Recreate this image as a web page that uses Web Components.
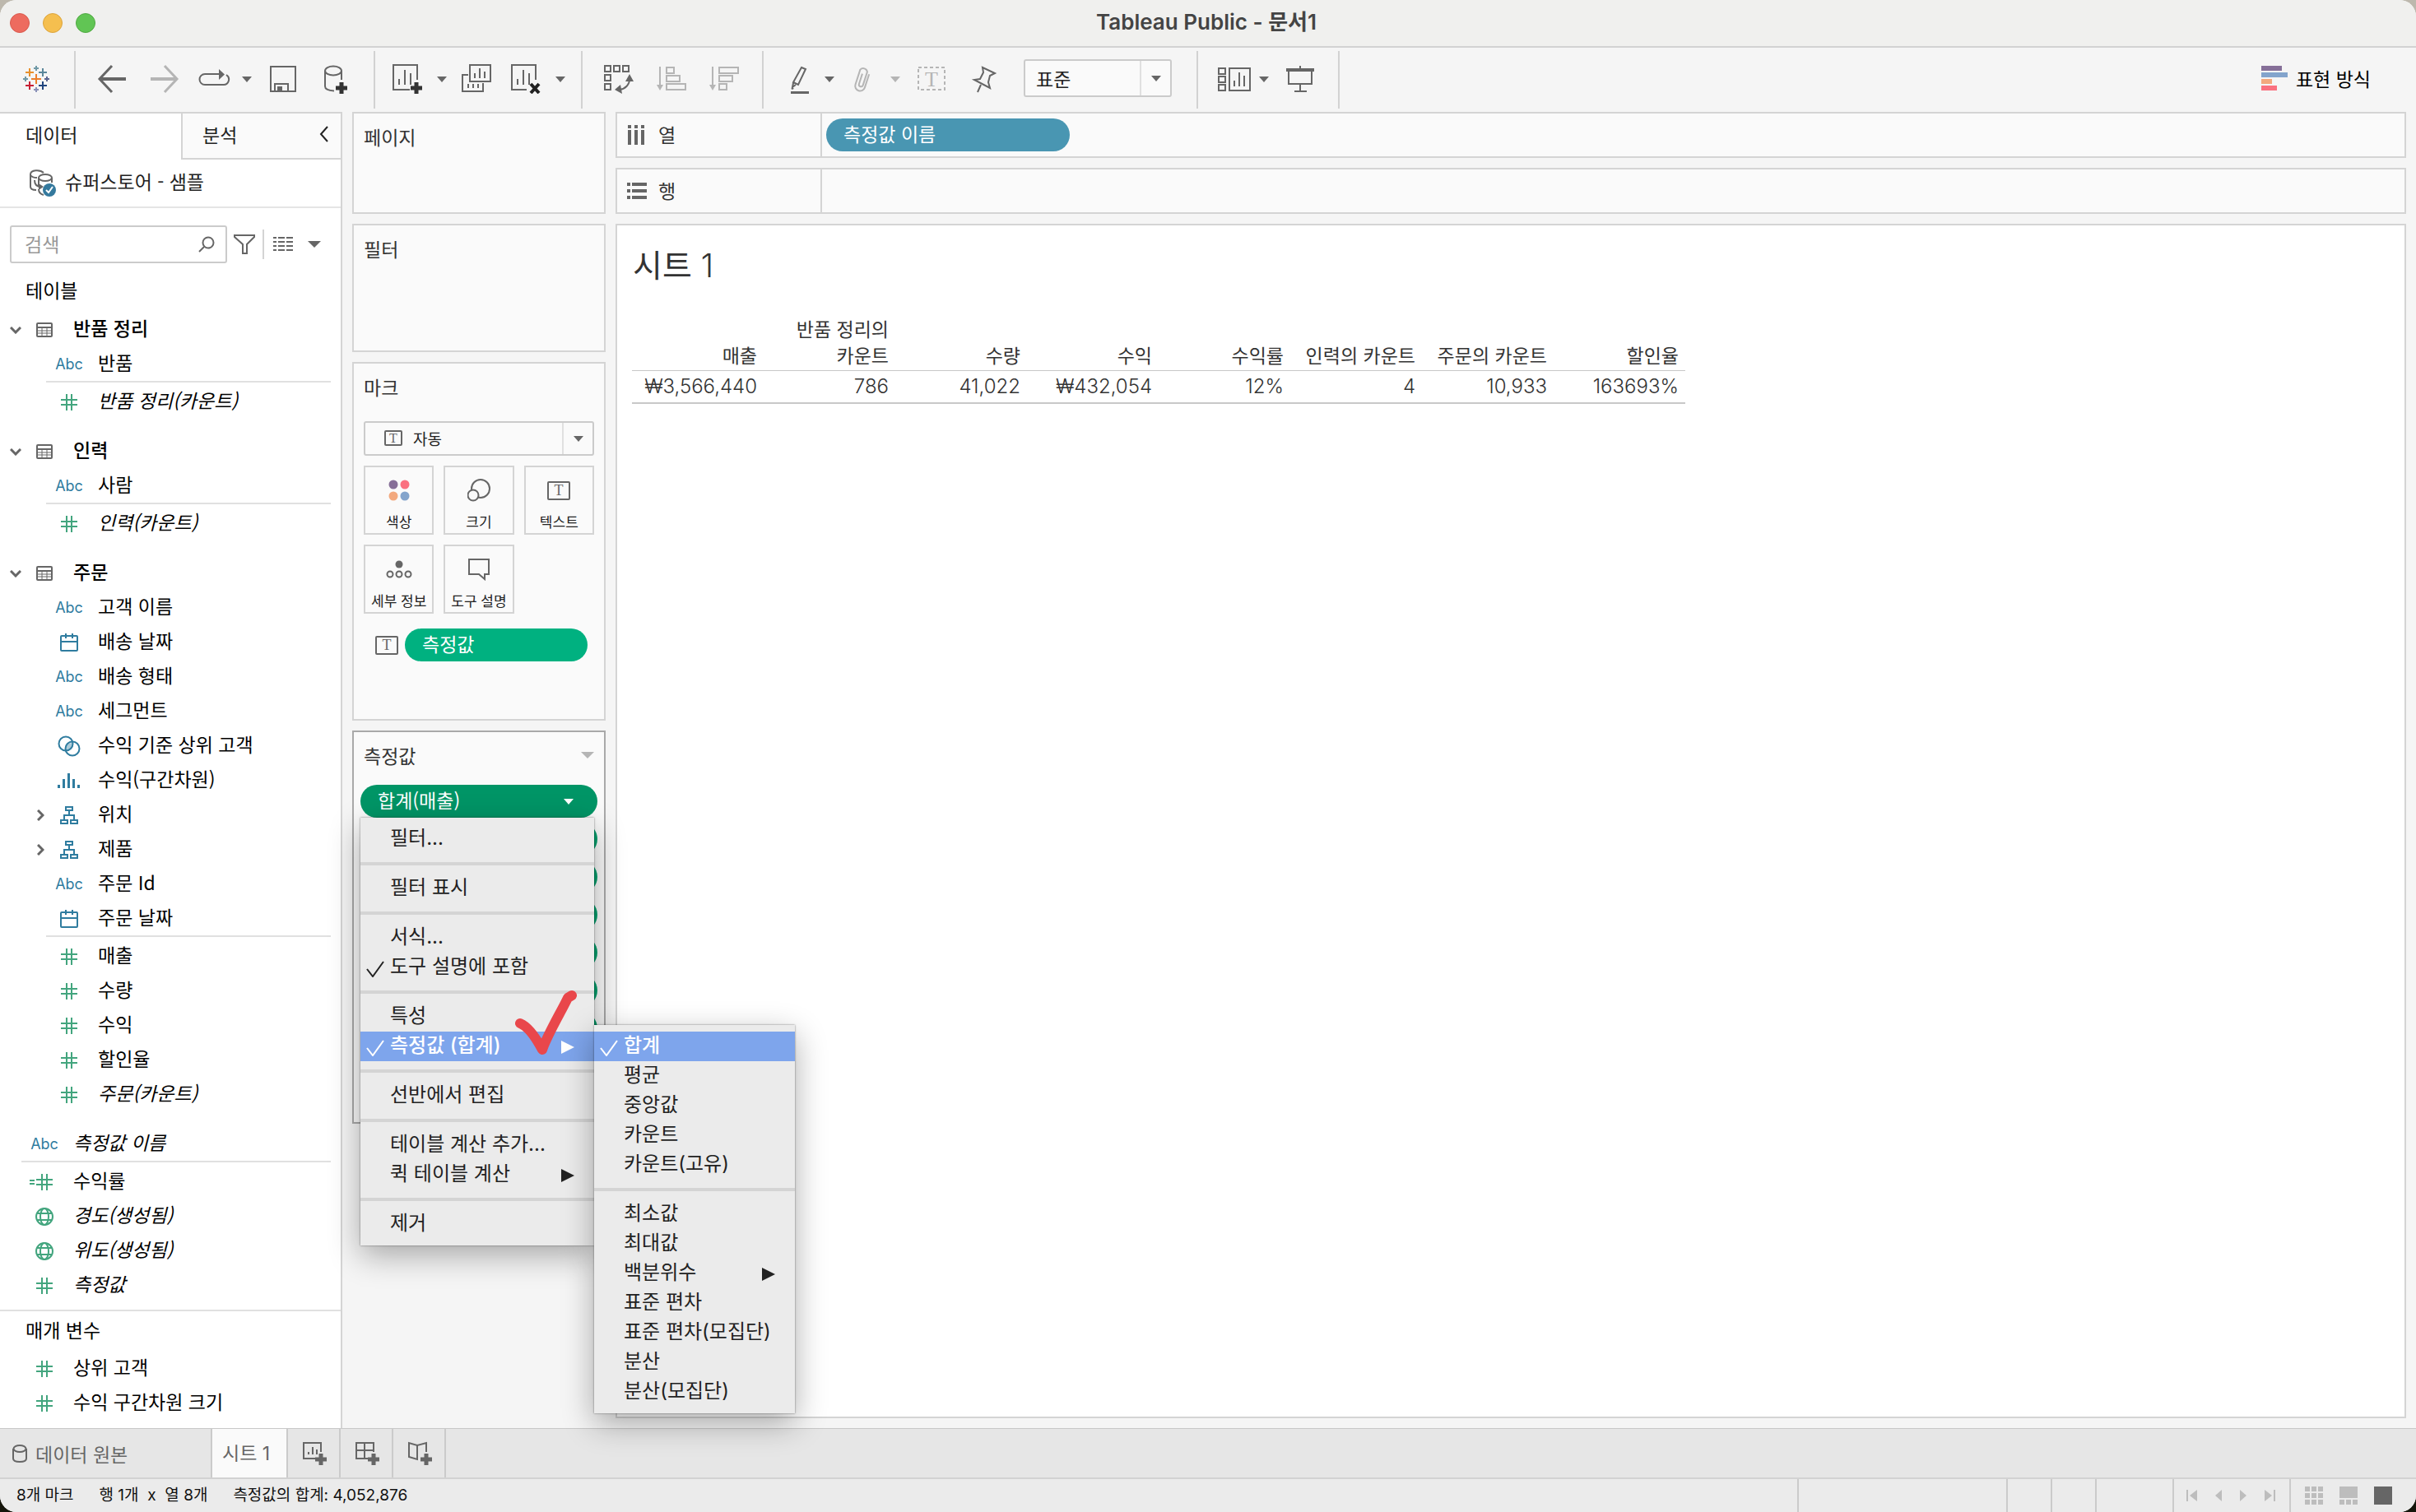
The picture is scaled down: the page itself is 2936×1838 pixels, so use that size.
<!DOCTYPE html>
<html lang="ko">
<head>
<meta charset="utf-8">
<title>Tableau Public - 문서1</title>
<style>
  body {
    margin: 0;
    background: linear-gradient(#bdb8ad 50%, #15160b 50%);
    font-family: "Noto Sans CJK KR", sans-serif;
    font-size: 23px;
    line-height: 32px;
    color: #222;
  }
</style>
</head>
<body>
<wb-window></wb-window>

<script>
// Icons: [width, height, markup]
const plus = (x, y, r, color, w = 2) =>
  `<path stroke="${color}" stroke-width="${w}" d="M${x - r} ${y}h${r * 2}M${x} ${y - r}v${r * 2}"/>`;
const hash = (x) => `<path d="M${x} 7h20M${x} 13h20M${x + 7} 0v20M${x + 13} 0v20"/>`;
const letter = (x, y, size) =>
  `<text x="${x}" y="${y}" font-size="${size}" text-anchor="middle" font-family="Liberation Serif, serif" fill="currentColor" stroke="none">T</text>`;

const icons = {
  logo: [36, 36,
    plus(18, 18, 6, "#eb7f2c") + plus(10, 10, 5, "#e8912d") + plus(26, 10, 5, "#5b879b") +
    plus(10, 26, 5, "#c72035") + plus(26, 26, 5, "#1f447e") + plus(18, 5, 3, "#7099a6") +
    plus(18, 31, 3, "#8a91b8") + plus(5, 18, 3, "#7099a6") + plus(31, 18, 3, "#5b6591")],
  back: [36, 36, '<path stroke-width="4" d="M3 18H35"/><path stroke-width="3" d="M18 2L3 18L18 34"/>'],
  forward: [36, 36, '<path stroke-width="4" d="M1 18H33"/><path stroke-width="3" d="M18 2L33 18L18 34"/>'],
  replay: [40, 36, '<path d="M27 12H9a6.500 6.500 0 0 0 0 13H31a6.500 6.500 0 0 0 4-12"/><path fill="currentColor" stroke="none" d="M26 6L33 12.500L26 19z"/>'],
  save: [36, 36, '<path d="M3 3H33V33H3zM8 33V24H24V33"/><path fill="currentColor" d="M12 32V28H16V32z"/>'],
  dataAdd: [36, 36, '<ellipse cx="15" cy="8" rx="10" ry="5.500"/><path d="M5 8V27C5 30 9 32 16 32.500M25 8V19"/>' + plus(25, 29, 7, "#333", 5)],
  sheetAdd: [36, 36, '<path d="M30 19V1H1V31H21M8 25V18M15 25V7M22 25V11"/>' + plus(29, 29, 7, "#333", 5)],
  sheetClear: [36, 36, '<path d="M30 19V1H1V31H19M8 25V18M15 25V7M22 25V11"/><path stroke="#222" stroke-width="4" d="M24 24L34 35M34 24L24 35"/>'],
  duplicate: [36, 36, '<path d="M10 1H35V21H10zM16 17V11M22 17V5M28 17V9M8 13H1V33H26V23M8 24V29M14 24V29M20 24V29"/>'],
  swap: [36, 36, '<path d="M1 2h7v7h-7zM12 2h7v7h-7zM23 2h7v7h-7zM1 13h7v7h-7zM1 24h7v7h-7z"/><path d="M31 18C31 25 26 30 19 31"/><path fill="currentColor" stroke="none" d="M31 12L36 21H26zM13 31L20 25L22 36z"/>'],
  sortAsc: [36, 36, '<path d="M4 3V28M12 4h9v7h-9zM12 14h16v7H12zM12 24h23v7H12z"/><path fill="currentColor" stroke="none" d="M0 25H8L4 32z"/>'],
  sortDesc: [36, 36, '<path d="M4 3V28M12 4h23v7H12zM12 14h16v7H12zM12 24h9v7h-9z"/><path fill="currentColor" stroke="none" d="M0 25H8L4 32z"/>'],
  highlight: [36, 36, '<path d="M20 4L25 6L16 25L10 22zM10 23L9 28L13 25"/><path stroke="none" fill="currentColor" d="M7 33H29V36H7zM8 27l3 3-3 1z"/>'],
  clip: [36, 36, '<path transform="rotate(18 18 18)" d="M24 10V27a6 6 0 0 1-12 0V8a5 5 0 0 1 9 0V25a2.500 2.500 0 0 1-5 0V12"/>'],
  textDash: [36, 36, '<path stroke-dasharray="4 3" d="M2 4H34V31H2z"/>' + letter(18, 27, 26)],
  pin: [36, 36, '<path d="M16 4L31 11L25 14L23 22L25 29L6 19L13 18L17 10zM14 25L10 34"/>'],
  cards: [40, 36, '<path d="M1 5h8v7H1zM1 15h8v7H1zM1 25h8v7H1zM14 5H39V32H14zM20 27V20M26 27V10M32 27V14"/>'],
  present: [36, 36, '<path d="M4 8H32V24H4zM18 2V6M18 24V33M11 33H26"/><path stroke-width="4" d="M1 7H35"/>'],
  showMe: [32, 30, '<g stroke="none"><path fill="#866f98" d="M0 0h25v6H0z"/><path fill="#83a4cc" d="M0 8h32v6H0z"/><path fill="#f3a97e" d="M0 16h13v6H0z"/><path fill="#fa7180" d="M0 24h19v6H0z"/></g>'],
  caret: [12, 7, '<path fill="currentColor" stroke="none" d="M0 0H12L6 7z"/>'],
  caretWide: [16, 8, '<path fill="currentColor" stroke="none" d="M0 0H16L8 8z"/>'],
  chevLeft: [12, 20, '<path d="M10 1L2 10L10 19"/>'],
  chevDown: [14, 9, '<path stroke-width="3" d="M1 1L7 7L13 1"/>'],
  chevRight: [9, 14, '<path stroke-width="3" d="M1 1L7 7L1 13"/>'],
  source: [34, 34, '<path d="M18 4C14 0 2 0 2 6V21C2 24 5 25 9 25M2 7C4 10 8 10 10 10M7 13C7 19 10 21 15 21"/><ellipse cx="20" cy="10" rx="8" ry="4"/><path d="M12 10V20M28 10V16M12 24C12 28 14 30 18 31"/><path fill="currentColor" stroke="none" d="M12 17l6 4-6 4z"/><circle cx="25" cy="25" r="8" fill="#34799d" stroke="none"/><path stroke="#fff" d="M21 25L24 28L29 21"/>'],
  search: [20, 20, '<circle cx="12" cy="8" r="6.500"/><path d="M7 13L1 19"/>'],
  funnel: [28, 26, '<path d="M2 2H26V4L17 13V24H12V13L2 4z"/>'],
  list: [24, 20, '<path stroke-dasharray="4 2 8 2 8 2" d="M0 2H24M0 7H24M0 12H24M0 17H24"/>'],
  table: [20, 20, '<rect x="1" y="2" width="18" height="16" rx="1"/><path d="M1 7H19"/><path stroke-width="1" d="M1 11H19M1 14H19M7 7V18M13 7V18"/>'],
  hash: [20, 20, hash(0)],
  calc: [40, 20, hash(10) + '<path d="M2 8H8M2 12H8"/>'],
  date: [22, 22, '<rect x="1" y="3" width="20" height="18" rx="1"/><path d="M1 10H21M7 0V6M15 0V6"/>'],
  set: [28, 26, '<path fill="currentColor" fill-opacity=".4" stroke="none" d="M18 9C12 9 9 13 10 18C16 18 19 14 18 9z"/><circle cx="10" cy="10" r="8.500"/><circle cx="18" cy="16" r="8.500"/>'],
  bin: [28, 20, '<g fill="currentColor" stroke="none"><rect y="15" width="3" height="4"/><rect x="6" y="8" width="3" height="11"/><rect x="12" y="1" width="3" height="18"/><rect x="18" y="8" width="3" height="11"/><rect x="24" y="15" width="3" height="4"/></g>'],
  hierarchy: [22, 22, '<path d="M7 1h8v4H7zM1 17h8v4H1zM13 17h8v4h-8zM11 5V11M5 17V11H17V17"/>'],
  globe: [22, 22, '<circle cx="11" cy="11" r="10"/><ellipse cx="11" cy="11" rx="5" ry="10"/><path d="M2 7H20M2 15H20"/>'],
  columns: [24, 24, '<path stroke-width="4" stroke-dasharray="4 2 18" d="M3 0V24M11 0V24M19 0V24"/>'],
  rows: [24, 20, '<path stroke-width="4" stroke-dasharray="4 2 18" d="M0 2H24M0 10H24M0 18H24"/>'],
  textBox: [28, 24, '<rect x="1" y="2" width="26" height="21" rx="1"/>' + letter(14, 18, 18)],
  textSmall: [22, 20, '<rect x="1" y="1" width="20" height="17" rx="1"/>' + letter(11, 15, 16)],
  color: [26, 26, '<g stroke="none"><circle cx="6" cy="6" r="5.500" fill="#866f98"/><circle cx="20" cy="6" r="5.500" fill="#fa7180"/><circle cx="6" cy="20" r="5.500" fill="#f3a97e"/><circle cx="20" cy="20" r="5.500" fill="#83a4cc"/></g>'],
  size: [28, 28, '<circle cx="16" cy="12" r="11"/><circle cx="7" cy="20" r="6.500" fill="#fafafa"/>'],
  detail: [32, 24, '<circle cx="16" cy="6" r="4.500" fill="currentColor" stroke="none"/><circle cx="5" cy="18" r="3.500"/><circle cx="16" cy="18" r="3.500"/><circle cx="27" cy="18" r="3.500"/>'],
  tooltip: [28, 28, '<path d="M2 2H26V20H21V26L14 20H2z"/>'],
  check: [22, 20, '<path d="M1 10L8 19L21 1"/>'],
  arrow: [16, 16, '<path fill="currentColor" stroke="none" d="M0 0L16 8L0 16z"/>'],
  mark: [76, 80, '<path stroke-width="12" stroke-linecap="round" stroke-linejoin="round" d="M6 41C16 45 25 58 33 73C39 55 57 25 64 10L69 7"/>'],
  cylinder: [18, 22, '<ellipse cx="9" cy="5" rx="7.500" ry="4"/><path d="M1 5V17C1 20 5 21 9 21C13 21 17 20 17 17V5"/>'],
  tabSheet: [30, 30, '<path d="M22 13V2H1V21H16M7 16V13M12 16V7M17 16V10"/>' + plus(22, 22, 7, "#666", 5)],
  tabBoard: [30, 30, '<path d="M22 13V2H1V21H16M11 2V21M1 11H22"/>' + plus(22, 22, 7, "#666", 5)],
  tabStory: [30, 30, '<path d="M22 13V2L11 5L1 2V19L11 22V5"/>' + plus(22, 22, 7, "#666", 5)],
  first: [14, 14, '<path d="M1 0V14"/><path fill="currentColor" stroke="none" d="M13 0V14L4 7z"/>'],
  prev: [10, 14, '<path fill="currentColor" stroke="none" d="M9 0V14L1 7z"/>'],
  next: [10, 14, '<path fill="currentColor" stroke="none" d="M1 0V14L9 7z"/>'],
  last: [14, 14, '<path d="M13 0V14"/><path fill="currentColor" stroke="none" d="M1 0V14L10 7z"/>'],
  grid: [22, 22, '<path stroke-width="6" stroke-dasharray="6 2" d="M0 3H22M0 11H22M0 19H22"/>'],
  film: [22, 22, '<path stroke-width="14" d="M0 7H22"/><path stroke-width="6" stroke-dasharray="6 2" d="M0 19H22"/>'],
  full: [22, 22, '<path fill="currentColor" stroke="none" d="M0 0H22V22H0z"/>'],
};

class WbIcon extends HTMLElement {
  static observedAttributes = ["name"];

  constructor() {
    super();
    this.attachShadow({ mode: "open" });
  }

  attributeChangedCallback(attribute, previous, name) {
    const [w, h, body] = icons[name];
    this.shadowRoot.innerHTML = `
      <style>
        :host { display: block; flex: none; }
        svg { display: block; }
      </style>
      <svg width="${w}" height="${h}" viewBox="0 0 ${w} ${h}" fill="none" stroke="currentColor" stroke-width="2" aria-hidden="true">${body}</svg>
    `;
  }
}

customElements.define("wb-icon", WbIcon);

// Registers an element whose shadow root is cloned from one template
const define = (name, html, setup) => {
  const template = document.createElement("template");
  template.innerHTML = html;
  customElements.define(name, class extends HTMLElement {
    constructor() {
      super();
      this.attachShadow({ mode: "open" }).append(document.importNode(template.content, true));
    }
    connectedCallback() {
      if (setup) setup(this, this.shadowRoot);
    }
  });
};

define("wb-titlebar", `
  <style>
    :host {
      display: grid;
      grid-template-columns: 1fr auto 1fr;
      align-items: center;
      height: 56px;
      background: #f0f0ee;
      border-bottom: 2px solid #d2d2d2;
    }
    .lights { display: flex; gap: 16px; padding-left: 12px; }
    button { width: 24px; height: 24px; padding: 0; border: 1px solid #d8594d; border-radius: 50%; background: #ed6b5f; }
    button:nth-child(2) { background: #f5bf4f; border-color: #dba33b; }
    button:nth-child(3) { background: #61c554; border-color: #50a842; }
    h1 { margin: 0; padding: 0 4px 2px 0; font: 600 26px/32px Inter, "Noto Sans CJK KR", sans-serif; color: #444; }
  </style>
  <div class="lights">
    <button aria-label="닫기"></button><button aria-label="최소화"></button><button aria-label="확대"></button>
  </div>
  <h1><slot></slot></h1>
`);

define("wb-tool", `
  <style>
    :host { display: block; flex: none; width: 64px; margin-bottom: 2px; color: #666; }
    :host([size="60"]) { width: 60px; }
    :host([size="56"]) { width: 56px; }
    :host([size="48"]) { width: 48px; }
    :host([icon="caret"]) { width: 24px; }
    :host([off]) { color: #b5b5b5; }
    button {
      display: flex; align-items: center; justify-content: center;
      width: 100%; height: 48px; padding: 0; border: 0; background: none; color: inherit;
    }
  </style>
  <button><wb-icon></wb-icon></button>
`, (host, root) => {
  root.querySelector("wb-icon").setAttribute("name", host.getAttribute("icon"));
  root.querySelector("button").setAttribute("aria-label", host.getAttribute("label"));
});

define("wb-select", `
  <style>
    :host { display: flex; box-sizing: border-box; height: 46px; border: 2px solid #cbcbcb; border-radius: 3px; background: #fafafa; }
    .lead { display: flex; align-items: center; padding-left: 23px; color: #666; }
    :host(:not([icon])) .lead { display: none; }
    select {
      appearance: none; flex: 1; min-width: 0; border: 0; background: none; padding: 0 13px 1px;
      font: inherit; color: #222;
    }
    .caret { display: flex; align-items: center; justify-content: center; width: 35px; border-left: 2px solid #e0e0e0; color: #666; }
  </style>
  <span class="lead"><wb-icon name="textSmall"></wb-icon></span>
  <select><option></option></select>
  <span class="caret"><wb-icon name="caret"></wb-icon></span>
`, (host, root) => {
  root.querySelector("option").textContent = host.getAttribute("value");
  root.querySelector("select").setAttribute("aria-label", host.getAttribute("label"));
});

define("wb-toolbar", `
  <style>
    :host { display: flex; height: 78px; padding-top: 4px; box-sizing: border-box; background: #f5f5f5; }
    .group {
      display: flex; align-items: center; height: 70px; box-sizing: border-box;
      padding: 0 14px 0 12px; border-right: 2px solid #d2d2d2;
    }
    .group.tight { padding: 0 13px 0 9px; }
    .group.wide { padding-left: 20px; }
    wb-select { width: 180px; margin: 0 16px 4px; }
    .show {
      display: flex; align-items: center; gap: 10px; height: 70px;
      margin-left: auto; padding: 0 55px 4px 0; border: 0; background: none; font: inherit; color: #000;
    }
  </style>
  <div class="group"><wb-tool icon="logo" label="시작 페이지"></wb-tool></div>
  <div class="group">
    <wb-tool icon="back" label="실행 취소"></wb-tool>
    <wb-tool icon="forward" label="다시 실행" off></wb-tool>
    <wb-tool icon="replay" label="재생" size="56"></wb-tool>
    <wb-tool icon="caret" label="재생 옵션"></wb-tool>
    <wb-tool icon="save" label="저장"></wb-tool>
    <wb-tool icon="dataAdd" label="새 데이터 원본"></wb-tool>
  </div>
  <div class="group tight">
    <wb-tool icon="sheetAdd" label="새 워크시트" size="60"></wb-tool>
    <wb-tool icon="caret" label="새 워크시트 옵션"></wb-tool>
    <wb-tool icon="duplicate" label="복제" size="60"></wb-tool>
    <wb-tool icon="sheetClear" label="시트 지우기" size="60"></wb-tool>
    <wb-tool icon="caret" label="지우기 옵션"></wb-tool>
  </div>
  <div class="group">
    <wb-tool icon="swap" label="행과 열 바꾸기"></wb-tool>
    <wb-tool icon="sortAsc" label="오름차순 정렬" off></wb-tool>
    <wb-tool icon="sortDesc" label="내림차순 정렬" off></wb-tool>
  </div>
  <div class="group wide">
    <wb-tool icon="highlight" label="하이라이트" size="48"></wb-tool>
    <wb-tool icon="caret" label="하이라이트 옵션"></wb-tool>
    <wb-tool icon="clip" label="그룹" size="56" off></wb-tool>
    <wb-tool icon="caret" label="그룹 옵션" off></wb-tool>
    <wb-tool icon="textDash" label="마크 레이블" off></wb-tool>
    <wb-tool icon="pin" label="축 고정"></wb-tool>
    <wb-select value="표준" label="맞춤"></wb-select>
  </div>
  <div class="group wide">
    <wb-tool icon="cards" label="카드 표시" size="48"></wb-tool>
    <wb-tool icon="caret" label="카드 옵션"></wb-tool>
    <wb-tool icon="present" label="프레젠테이션"></wb-tool>
  </div>
  <button class="show"><wb-icon name="showMe"></wb-icon>표현 방식</button>
`);

// A line of the data pane: toggle, type icon, name
define("wb-field", `
  <style>
    :host {
      display: grid; grid-template-columns: 28px 40px 1fr; align-items: center;
      height: 42px; padding-left: 6px; color: #000;
    }
    :host([nested]) { padding-left: 36px; }
    :host([group]) { font-weight: 500; margin-top: 18px; }
    :host([generated]) { font-style: italic; }
    span { display: flex; justify-content: center; padding-top: 4px; color: #666; }
    .toggle { padding-right: 2px; }
    .dimension { color: #2f7c9f; }
    .measure { color: #43a57e; }
    .abc { font: 18px/24px Inter, sans-serif; }
    .name { display: block; padding: 0 0 2px 15px; color: inherit; white-space: nowrap; }
  </style>
  <span class="toggle"></span><span class="type"></span><span class="name"><slot></slot></span>
`, (host, root) => {
  const type = host.getAttribute("type");
  const toggle = host.getAttribute("toggle");
  const cell = root.querySelector(".type");
  if (toggle) root.querySelector(".toggle").innerHTML = `<wb-icon name="${toggle}"></wb-icon>`;
  if (type === "abc") {
    cell.textContent = "Abc";
    cell.classList.add("abc", "dimension");
  } else {
    cell.innerHTML = `<wb-icon name="${type}"></wb-icon>`;
    if (["hash", "calc", "globe"].includes(type)) cell.classList.add("measure");
    else if (type !== "table") cell.classList.add("dimension");
  }
});

define("wb-sidebar", `
  <style>
    :host { display: block; width: 416px; flex: none; box-sizing: border-box; background: #fff; border-right: 2px solid #d4d4d4; border-top: 2px solid #d4d4d4; }
    button { border: 0; background: none; padding: 0; font: inherit; color: #222; text-align: left; }
    .tabs { display: flex; height: 56px; }
    .tabs .data { width: 220px; padding: 0 0 6px 31px; }
    .tabs .analysis {
      flex: 1; display: flex; align-items: center; justify-content: space-between;
      padding: 0 14px 4px 24px; background: #fafafa; border-left: 2px solid #d4d4d4; border-bottom: 2px solid #d4d4d4;
    }
    .source { display: flex; align-items: center; gap: 10px; height: 57px; padding-left: 35px; color: #666; border-bottom: 2px solid #e5e5e5; }
    .source a { padding-bottom: 5px; color: #222; text-decoration: none; }
    .find { display: flex; align-items: center; padding: 21px 12px 0; color: #666; }
    label { display: flex; align-items: center; width: 264px; height: 46px; box-sizing: border-box; border: 2px solid #cbcbcb; border-radius: 3px; padding-right: 13px; }
    input { flex: 1; min-width: 0; border: 0; outline: 0; padding: 0 0 2px 16px; background: none; font: inherit; }
    input::placeholder { color: #999; opacity: 1; }
    .find button { display: flex; color: #666; }
    .funnel { margin-left: 7px; }
    .view { gap: 18px; align-items: center; margin-left: 8px; padding-left: 11px; height: 36px; border-left: 2px solid #d4d4d4; }
    h2 { margin: 0; padding-left: 31px; font-size: 23px; line-height: 32px; font-weight: 400; color: #000; }
    .find + h2 { padding-top: 16px; }
    .find + h2 + wb-field { margin-top: 10px; }
    hr { margin: 1px 12px 1px 56px; border: 0; height: 2px; background: #e0e0e0; }
    hr.outer { margin-left: 26px; }
    hr.full { margin: 10px 0 6px; }
    .loose { margin-top: 18px; }
    .params { margin-top: 9px; }
  </style>
  <div class="tabs">
    <button class="data">데이터</button>
    <button class="analysis">분석<wb-icon name="chevLeft"></wb-icon></button>
  </div>
  <div class="source"><wb-icon name="source"></wb-icon><a href="#source">슈퍼스토어 - 샘플</a></div>
  <div class="find">
    <label><input type="text" placeholder="검색" aria-label="검색"><wb-icon name="search"></wb-icon></label>
    <button class="funnel" aria-label="필터"><wb-icon name="funnel"></wb-icon></button>
    <button class="view" aria-label="보기"><wb-icon name="list"></wb-icon><wb-icon name="caretWide"></wb-icon></button>
  </div>
  <h2>테이블</h2>
  <wb-field group type="table" toggle="chevDown">반품 정리</wb-field>
  <wb-field nested type="abc">반품</wb-field>
  <hr>
  <wb-field nested generated type="hash">반품 정리(카운트)</wb-field>
  <wb-field group type="table" toggle="chevDown">인력</wb-field>
  <wb-field nested type="abc">사람</wb-field>
  <hr>
  <wb-field nested generated type="hash">인력(카운트)</wb-field>
  <wb-field group type="table" toggle="chevDown">주문</wb-field>
  <wb-field nested type="abc">고객 이름</wb-field>
  <wb-field nested type="date">배송 날짜</wb-field>
  <wb-field nested type="abc">배송 형태</wb-field>
  <wb-field nested type="abc">세그먼트</wb-field>
  <wb-field nested type="set">수익 기준 상위 고객</wb-field>
  <wb-field nested type="bin">수익(구간차원)</wb-field>
  <wb-field nested type="hierarchy" toggle="chevRight">위치</wb-field>
  <wb-field nested type="hierarchy" toggle="chevRight">제품</wb-field>
  <wb-field nested type="abc">주문 Id</wb-field>
  <wb-field nested type="date">주문 날짜</wb-field>
  <hr>
  <wb-field nested type="hash">매출</wb-field>
  <wb-field nested type="hash">수량</wb-field>
  <wb-field nested type="hash">수익</wb-field>
  <wb-field nested type="hash">할인율</wb-field>
  <wb-field nested generated type="hash">주문(카운트)</wb-field>
  <wb-field class="loose" generated type="abc">측정값 이름</wb-field>
  <hr class="outer">
  <wb-field type="calc">수익률</wb-field>
  <wb-field generated type="globe">경도(생성됨)</wb-field>
  <wb-field generated type="globe">위도(생성됨)</wb-field>
  <wb-field generated type="hash">측정값</wb-field>
  <hr class="full">
  <h2>매개 변수</h2>
  <wb-field class="params" type="hash">상위 고객</wb-field>
  <wb-field type="hash">수익 구간차원 크기</wb-field>
`);

define("wb-card", `
  <style>
    :host { display: block; box-sizing: border-box; background: #fafafa; border: 2px solid #d4d4d4; }
    :host([active]) { border-color: #a9a9a9; }
    header { display: flex; justify-content: space-between; align-items: center; height: 32px; padding: 12px 12px 0; }
    h2 { margin: 0; font-size: 23px; line-height: 32px; font-weight: 400; color: #333; }
    wb-icon { color: #b5b5b5; }
    :host(:not([active])) wb-icon { display: none; }
  </style>
  <header><h2></h2><wb-icon name="caretWide"></wb-icon></header>
  <slot></slot>
`, (host, root) => {
  root.querySelector("h2").textContent = host.getAttribute("heading");
});

define("wb-pill", `
  <style>
    :host {
      display: flex; align-items: center; justify-content: space-between; box-sizing: border-box;
      height: 40px; padding: 0 29px 0 21px; border-radius: 20px; background: #00a06d; color: #fff;
    }
    :host([kind="blue"]) { background: #4996b2; }
    :host([kind="green"]) { background: #00b180; }
    :host([kind="open"]) { background: #009566; }
    :host(:not([kind="open"])) wb-icon { display: none; }
    span { padding-bottom: 4px; }
  </style>
  <span><slot></slot></span><wb-icon name="caret"></wb-icon>
`);

define("wb-mark-button", `
  <style>
    :host { display: block; }
    button {
      display: flex; flex-direction: column; align-items: center; box-sizing: border-box;
      width: 100%; height: 84px; padding: 0; border: 2px solid #d4d4d4; background: #fafafa;
      font: 17px/22px "Noto Sans CJK KR", sans-serif; color: #222; white-space: nowrap;
    }
    .art { display: flex; align-items: center; height: 55px; color: #666; }
  </style>
  <button><span class="art"><wb-icon></wb-icon></span><slot></slot></button>
`, (host, root) => {
  root.querySelector("wb-icon").setAttribute("name", host.getAttribute("icon"));
});

// Drop-down menu; a nested wb-menu in the "sub" slot opens beside its item
define("wb-menu", `
  <style>
    :host {
      display: block; position: absolute; z-index: 5; box-sizing: border-box; padding: 8px 0;
      background: #ebebeb; color: #222; font-family: Inter, "Noto Sans CJK KR", sans-serif; font-size: 24px;
      box-shadow: 0 0 2px rgba(0, 0, 0, .5), 0 12px 36px rgba(0, 0, 0, .32);
    }
    ::slotted(hr) { margin: 10px 0; border: 0; height: 4px; background: #d4d4d4; }
  </style>
  <slot></slot>
`);

define("wb-menu-item", `
  <style>
    :host { display: block; position: relative; height: 36px; }
    :host([on]) { background: #7ea5ec; color: #fff; font-weight: 500; }
    button {
      display: flex; align-items: center; width: 100%; height: 36px; padding: 0 24px 2px 0;
      border: 0; background: none; font: inherit; color: inherit; white-space: nowrap;
    }
    .tick { display: flex; flex: none; box-sizing: border-box; width: 36px; padding: 6px 0 0 7px; }
    .tick wb-icon, .more { visibility: hidden; }
    :host([checked]) .tick wb-icon, :host([more]) .more { visibility: visible; }
    .more { margin: 0 0 0 auto; padding-top: 3px; }
    :host(:not([more])) .more { display: none; }
  </style>
  <button>
    <span class="tick"><wb-icon name="check"></wb-icon></span><slot></slot><wb-icon class="more" name="arrow"></wb-icon>
  </button>
  <slot name="sub"></slot>
`);

define("wb-cards", `
  <style>
    :host { display: flex; flex-direction: column; gap: 12px; width: 308px; flex: none; margin-left: 12px; position: relative; z-index: 2; }
    .pages { height: 124px; }
    .filters { height: 156px; }
    .marks { height: 436px; }
    .measures { height: 478px; }
    wb-select { height: 42px; margin: 26px 12px 12px; font-size: 19px; }
    .grid { display: grid; grid-template-columns: 1fr 1fr 1fr; gap: 12px; padding: 0 12px; }
    .encoded { display: grid; grid-template-columns: 28px 1fr; gap: 8px; align-items: center; padding: 18px 20px 0 26px; color: #666; }
    .list { display: grid; gap: 6px; padding: 20px 8px 0; }
    .anchor { position: relative; z-index: 1; }
    .main { top: 100%; left: 0; width: 284px; }
    .sub { top: -8px; left: 100%; width: 244px; color: #222; font-weight: 400; }
    .mark { position: absolute; left: 188px; top: -51px; color: #e9474b; z-index: 6; }
  </style>
  <wb-card class="pages" heading="페이지"></wb-card>
  <wb-card class="filters" heading="필터"></wb-card>
  <wb-card class="marks" heading="마크">
    <wb-select icon value="자동" label="마크 유형"></wb-select>
    <div class="grid">
      <wb-mark-button icon="color">색상</wb-mark-button>
      <wb-mark-button icon="size">크기</wb-mark-button>
      <wb-mark-button icon="textBox">텍스트</wb-mark-button>
      <wb-mark-button icon="detail">세부 정보</wb-mark-button>
      <wb-mark-button icon="tooltip">도구 설명</wb-mark-button>
    </div>
    <div class="encoded"><wb-icon name="textBox"></wb-icon><wb-pill kind="green">측정값</wb-pill></div>
  </wb-card>
  <wb-card class="measures" heading="측정값" active>
    <div class="list">
      <div class="anchor">
        <wb-pill kind="open">합계(매출)</wb-pill>
        <wb-menu class="main">
          <wb-menu-item>필터...</wb-menu-item>
          <hr>
          <wb-menu-item>필터 표시</wb-menu-item>
          <hr>
          <wb-menu-item>서식...</wb-menu-item>
          <wb-menu-item checked>도구 설명에 포함</wb-menu-item>
          <hr>
          <wb-menu-item>특성</wb-menu-item>
          <wb-menu-item on checked more>측정값 (합계)
            <wb-menu class="sub" slot="sub">
              <wb-menu-item on checked>합계</wb-menu-item>
              <wb-menu-item>평균</wb-menu-item>
              <wb-menu-item>중앙값</wb-menu-item>
              <wb-menu-item>카운트</wb-menu-item>
              <wb-menu-item>카운트(고유)</wb-menu-item>
              <hr>
              <wb-menu-item>최소값</wb-menu-item>
              <wb-menu-item>최대값</wb-menu-item>
              <wb-menu-item more>백분위수</wb-menu-item>
              <wb-menu-item>표준 편차</wb-menu-item>
              <wb-menu-item>표준 편차(모집단)</wb-menu-item>
              <wb-menu-item>분산</wb-menu-item>
              <wb-menu-item>분산(모집단)</wb-menu-item>
            </wb-menu>
            <wb-icon class="mark" slot="sub" name="mark"></wb-icon>
          </wb-menu-item>
          <hr>
          <wb-menu-item>선반에서 편집</wb-menu-item>
          <hr>
          <wb-menu-item>테이블 계산 추가...</wb-menu-item>
          <wb-menu-item more>퀵 테이블 계산</wb-menu-item>
          <hr>
          <wb-menu-item>제거</wb-menu-item>
        </wb-menu>
      </div>
      <wb-pill></wb-pill><wb-pill></wb-pill><wb-pill></wb-pill><wb-pill></wb-pill>
      <wb-pill></wb-pill><wb-pill></wb-pill><wb-pill></wb-pill>
    </div>
  </wb-card>
`);

define("wb-shelf", `
  <style>
    :host { display: flex; box-sizing: border-box; height: 56px; border: 2px solid #d4d4d4; background: #fafafa; }
    .head { display: flex; align-items: center; gap: 14px; width: 235px; padding-left: 12px; border-right: 2px solid #d4d4d4; color: #666; }
    h2 { margin: 0; padding-bottom: 2px; font-size: 23px; line-height: 32px; font-weight: 400; color: #333; }
    .drop { flex: 1; display: flex; align-items: center; padding-left: 5px; }
    ::slotted(wb-pill) { width: 296px; }
  </style>
  <div class="head"><wb-icon></wb-icon><h2></h2></div>
  <div class="drop"><slot></slot></div>
`, (host, root) => {
  root.querySelector("wb-icon").setAttribute("name", host.getAttribute("icon"));
  root.querySelector("h2").textContent = host.getAttribute("heading");
});

define("wb-sheet", `
  <style>
    :host { display: block; flex: 1; box-sizing: border-box; border: 2px solid #d4d4d4; background: #fff; color: #333; padding: 18px; }
    h2 { margin: 0; padding: 3px 0 0 1px; font: 400 39px/56px Inter, "Noto Sans CJK KR", sans-serif; }
    h2 span { font-weight: 300; }
    table { margin-top: 32px; width: 1280px; table-layout: fixed; border-collapse: collapse; text-align: right; }
    th { height: 64px; padding: 0 8px 3px; vertical-align: bottom; font-weight: 400; word-break: keep-all; border-bottom: 1px solid #c8c8c8; }
    td { height: 38px; padding: 0 8px; font: 300 24px/36px Inter, "Noto Sans CJK KR", sans-serif; border-bottom: 2px solid #c8c8c8; }
  </style>
  <h2>시트 <span>1</span></h2>
  <table>
    <thead><tr><th>매출</th><th>반품 정리의 카운트</th><th>수량</th><th>수익</th><th>수익률</th><th>인력의 카운트</th><th>주문의 카운트</th><th>할인율</th></tr></thead>
    <tbody><tr><td>₩3,566,440</td><td>786</td><td>41,022</td><td>₩432,054</td><td>12%</td><td>4</td><td>10,933</td><td>163693%</td></tr></tbody>
  </table>
`);

define("wb-tabs", `
  <style>
    :host { display: flex; height: 60px; box-sizing: border-box; background: #e6e6e6; border-top: 1px solid #c8c8c8; }
    button {
      display: flex; align-items: center; justify-content: center; gap: 10px; width: 64px; box-sizing: border-box; padding: 0 0 0 3px;
      border: 0; border-right: 2px solid #cbcbcb; background: none; font: inherit; color: #666;
    }
    .source { width: 258px; justify-content: flex-start; padding-left: 15px; }
    .sheet {
      width: 92px; justify-content: flex-start; padding-left: 12px; background: #fafafa;
      font-family: Inter, "Noto Sans CJK KR", sans-serif; white-space: nowrap;
    }
  </style>
  <button class="source"><wb-icon name="cylinder"></wb-icon>데이터 원본</button>
  <button class="sheet">시트 1</button>
  <button aria-label="새 워크시트"><wb-icon name="tabSheet"></wb-icon></button>
  <button aria-label="새 대시보드"><wb-icon name="tabBoard"></wb-icon></button>
  <button aria-label="새 스토리"><wb-icon name="tabStory"></wb-icon></button>
`);

define("wb-status", `
  <style>
    :host {
      display: flex; height: 42px; box-sizing: border-box; padding-left: 20px; background: #ebebeb; border-top: 2px solid #d2d2d2;
      font: 19px/40px Inter, "Noto Sans CJK KR", sans-serif; color: #111;
    }
    .text { display: flex; gap: 31px; white-space: pre; }
    .cells { display: flex; margin-left: auto; }
    .cells > div { display: flex; align-items: center; box-sizing: border-box; border-left: 2px solid #cbcbcb; width: 54px; }
    .cells .a { width: 254px; }
    .cells .b { width: 94px; }
    .cells .nav { width: 142px; gap: 20px; padding-left: 15px; color: #bdbdbd; }
    .cells .views { width: 154px; gap: 20px; padding-left: 17px; color: #bdbdbd; }
    button { display: flex; padding: 0; border: 0; background: none; color: inherit; }
    .on { color: #666; }
  </style>
  <div class="text"><span>8개 마크</span><span>행 1개  x  열 8개</span><span>측정값의 합계: 4,052,876</span></div>
  <div class="cells">
    <div class="a"></div><div></div><div></div><div class="b"></div>
    <div class="nav">
      <button aria-label="처음"><wb-icon name="first"></wb-icon></button>
      <button aria-label="이전"><wb-icon name="prev"></wb-icon></button>
      <button aria-label="다음"><wb-icon name="next"></wb-icon></button>
      <button aria-label="마지막"><wb-icon name="last"></wb-icon></button>
    </div>
    <div class="views">
      <button aria-label="시트 정렬"><wb-icon name="grid"></wb-icon></button>
      <button aria-label="필름 스트립"><wb-icon name="film"></wb-icon></button>
      <button class="on" aria-label="탭"><wb-icon name="full"></wb-icon></button>
    </div>
  </div>
`);

define("wb-window", `
  <style>
    :host { display: flex; flex-direction: column; min-height: 100vh; border-radius: 20px; overflow: hidden; background: #f5f5f5; }
    main { display: flex; flex: 1; }
    .work { display: flex; flex-direction: column; gap: 12px; flex: 1; min-width: 0; padding: 0 12px 12px; }
  </style>
  <wb-titlebar>Tableau Public - 문서1</wb-titlebar>
  <wb-toolbar></wb-toolbar>
  <main>
    <wb-sidebar></wb-sidebar>
    <wb-cards></wb-cards>
    <div class="work">
      <wb-shelf icon="columns" heading="열"><wb-pill kind="blue">측정값 이름</wb-pill></wb-shelf>
      <wb-shelf icon="rows" heading="행"></wb-shelf>
      <wb-sheet></wb-sheet>
    </div>
  </main>
  <wb-tabs></wb-tabs>
  <wb-status></wb-status>
`);
</script>
</body>
</html>
